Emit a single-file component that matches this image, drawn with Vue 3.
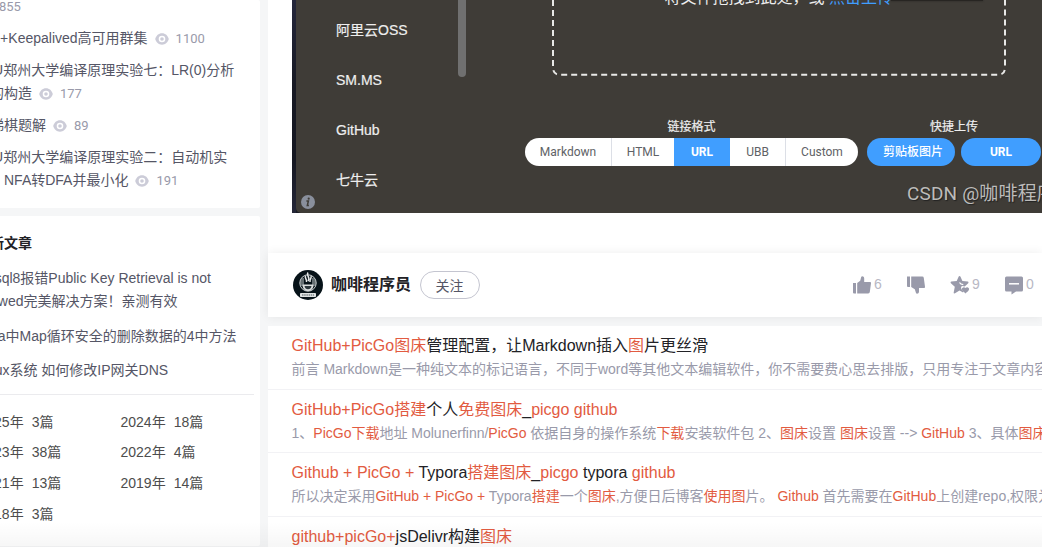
<script setup>
const hot = [
  { lines: [''], views: '855', start: true },
  { lines: ['K8s+Keepalived高可用群集'], views: '1100' },
  { lines: ['ZZU郑州大学编译原理实验七：LR(0)分析', '表的构造'], views: '177' },
  { lines: ['阶梯棋题解'], views: '89' },
  { lines: ['ZZU郑州大学编译原理实验二：自动机实', '验：NFA转DFA并最小化'], views: '191' }
]
const latest = [
  ['mysql8报错Public Key Retrieval is not', 'allowed完美解决方案！亲测有效'],
  ['Java中Map循环安全的删除数据的4中方法'],
  ['Linux系统 如何修改IP网关DNS']
]
const years = [
  ['2025年', '3篇'], ['2024年', '18篇'],
  ['2023年', '38篇'], ['2022年', '4篇'],
  ['2021年', '13篇'], ['2019年', '14篇'],
  ['2018年', '3篇']
]
const menu = ['阿里云OSS', 'SM.MS', 'GitHub', '七牛云']
const formats = ['Markdown', 'HTML', 'URL', 'UBB', 'Custom']
// Text wrapped in [ ] is a highlighted keyword.
const split = (s) => s.split(/(\[[^\]]*\])/).filter(Boolean).map((t) =>
  t[0] === '[' ? { t: t.slice(1, -1), em: true } : { t, em: false })
const related = [
  ['[GitHub+PicGo图床]管理配置，让Markdown插入[图]片更丝滑', '前言 Markdown是一种纯文本的标记语言，不同于word等其他文本编辑软件，你不需要费心思去排版，只用专注于文章内容'],
  ['[GitHub+PicGo搭建]个人[免费图床]_[picgo github]', '1、[PicGo下载]地址 Molunerfinn/[PicGo] 依据自身的操作系统[下载]安装软件包 2、[图床]设置 [图床]设置 --> [GitHub] 3、具体[图床]'],
  ['[Github + PicGo + ]Typora[搭建图床]_[picgo] typora [github]', '所以决定采用[GitHub + PicGo + ]Typora[搭建]一个[图床],方便日后博客[使用图]片。 [Github] 首先需要在[GitHub]上创建repo,权限为'],
  ['[github+picGo+]jsDelivr构建[图床]', '']
].map((r) => r.map(split))
</script>

<template>
  <div class="page">
    <aside class="side">
      <section class="card hot">
        <div v-for="(h, i) in hot" :key="i" class="hot-item" :class="{ first: h.start }">
          <div v-for="(l, j) in h.lines" :key="j" class="line">
            <span>{{ l }}</span>
            <template v-if="j === h.lines.length - 1">
              <svg v-if="!h.start" class="eye" viewBox="0 0 14 12"><path fill="#ccccd8" fill-rule="evenodd" d="M7 .3C3.500.3 1.200 2.600.2 6c1 3.400 3.300 5.700 6.800 5.700s5.800-2.300 6.800-5.700C12.800 2.600 10.500.3 7 .3zM7 2.700a3.300 3.300 0 1 1 0 6.600 3.300 3.300 0 0 1 0-6.600zM7 4.200a1.800 1.800 0 1 0 0 3.600 1.800 1.800 0 0 0 0-3.600z" /></svg>
              <span class="num">{{ h.views }}</span>
            </template>
          </div>
        </div>
      </section>
      <section class="card latest">
        <h3>最新文章</h3>
        <div v-for="(a, i) in latest" :key="i" class="late-item">
          <div v-for="l in a" :key="l" class="line">{{ l }}</div>
        </div>
        <div class="years">
          <div v-for="y in years" :key="y[0]" class="year"><span>{{ y[0] }}</span><span>{{ y[1] }}</span></div>
        </div>
      </section>
    </aside>

    <main class="main">
      <section class="article">
        <div class="shot">
          <div class="edge"></div>
          <div class="app">
            <nav class="menu">
              <div v-for="m in menu" :key="m">{{ m }}</div>
              <svg class="info" viewBox="0 0 14 14"><circle cx="7" cy="7" r="7" fill="#898f9c" /><circle cx="7.700" cy="3.700" r="1.100" fill="#3f3c37" /><path d="M5.400 6h2L6.300 10.500h1.600" fill="none" stroke="#3f3c37" stroke-width="1.500" /></svg>
            </nav>
            <div class="rail"></div>
            <div class="work">
              <svg class="drop" viewBox="0 0 456 77"><path d="M2 -1V67.500Q2 74.800 9 74.800H447Q454 74.800 454 67.500V-1" fill="none" stroke="#e9e9e7" stroke-width="2" stroke-dasharray="6 4" stroke-dashoffset="9" /></svg>
              <div class="drop-text">将文件拖拽到此处，或 <b>点击上传</b></div>
              <div class="tip"></div>
              <div class="tools">
                <div class="tool">
                  <div class="label">链接格式</div>
                  <div class="formats"><span v-for="f in formats" :key="f" :class="['f-' + f]">{{ f }}</span></div>
                </div>
                <div class="tool quick">
                  <div class="label">快捷上传</div>
                  <div class="btns"><span class="clip">剪贴板图片</span><span class="url">URL</span></div>
                </div>
              </div>
              <div class="mark">CSDN @咖啡程序员</div>
            </div>
          </div>
        </div>
      </section>

      <section class="author">
        <svg class="avatar" viewBox="0 0 30 30">
          <circle cx="15" cy="15" r="15" fill="#071319" />
          <circle cx="15" cy="13" r="8.200" fill="none" stroke="#cfd4d5" stroke-width="1" />
          <path d="M15 2.500c-2.500 3 3 4.500 0 8.500M12.500 6c-1 2 1.500 3 1 6M18 6c1 2-1.500 3-1 6" fill="none" stroke="#e8ebeb" stroke-width="1.500" />
          <path d="M8 9v7M10 8v8M20 8v8M22 9v7" stroke="#a5adaf" stroke-width="1.200" />
          <path d="M9.500 14.500h11c0 4-2 6.500-5.500 6.500s-5.500-2.500-5.500-6.500z" fill="#d9dddd" />
          <path d="M11.500 16h7c-.5 2.200-1.500 3.300-3.500 3.300s-3-1.100-3.500-3.300z" fill="#2b363b" />
          <rect x="7" y="23" width="16" height="4" rx=".8" fill="#dfe3e3" />
          <path d="M9 25h12" stroke="#4b565a" stroke-dasharray="1.500 .7" />
        </svg>
        <span class="name">咖啡程序员</span>
        <span class="follow">关注</span>
        <div class="acts">
          <div class="act up"><svg viewBox="0 0 20 20"><path fill="#999aaa" d="M1 8h3v10.500H2a1 1 0 0 1-1-1zM5.200 8l3-2.200 1-3.800c.3-1.200 3-1 3 1.500V7H18a1 1 0 0 1 1 1.200l-1.200 8.900a1.600 1.600 0 0 1-1.600 1.400h-11z" /></svg>6</div>
          <div class="act down"><svg viewBox="0 0 20 20"><path fill="#999aaa" d="M1 1.500h3V12H2a1 1 0 0 1-1-1zM5.200 1.500h11a1.600 1.600 0 0 1 1.600 1.400l1.200 8.900a1 1 0 0 1-1 1.200h-5v3.500c0 2.500-2.700 2.700-3 1.500l-1.200-3.800L5.200 12z" /></svg></div>
          <div class="act star"><svg viewBox="0 0 20 20"><path fill="#999aaa" d="M9.500 1c.5 0 .8.3 1 .8l1.900 4.300 5.300.5c.8.1 1.100 1 .5 1.600l-3.500 3.400-2.400-.6c-1.800.7-1.600 3 1 5.100l-.2 1.400-3.600-1.900-4.500 2.700c-.7.400-1.500-.1-1.300-.9l1.100-5.600L.9 8.200c-.6-.6-.3-1.500.5-1.600l5.300-.5 1.900-4.300c.2-.5.500-.8.9-.8z" /><path d="M9.500 7.500c.8 1.500 2 2 3.800 2.200" fill="none" stroke="#fff" stroke-width="1.300" /><path fill="#999aaa" d="M15.500 13c1.500-1.500 4-.3 3.500 1.600-.3 1.200-1.800 2.500-3.500 3.900-1.700-1.400-3.200-2.700-3.500-3.900-.5-1.900 2-3.100 3.500-1.600z" /></svg>9</div>
          <div class="act talk"><svg viewBox="0 0 20 20"><path fill="#999aaa" d="M2.500 1.500h15A1.500 1.500 0 0 1 19 3v12a1.500 1.500 0 0 1-1.500 1.500H12l-4.500 3v-3h-5A1.500 1.500 0 0 1 1 15V3a1.500 1.500 0 0 1 1.500-1.500z" /><path d="M5 8.800h10" stroke="#fff" stroke-width="1.500" /></svg>0</div>
        </div>
      </section>

      <section class="related">
        <article v-for="(r, i) in related" :key="i">
          <div class="r-title"><span v-for="(p, j) in r[0]" :key="j" :class="{ em: p.em }">{{ p.t }}</span></div>
          <div class="r-desc"><span v-for="(p, j) in r[1]" :key="j" :class="{ em: p.em }">{{ p.t }}</span></div>
        </article>
      </section>
    </main>
    <div class="fade"></div>
  </div>
</template>

<style>
body { margin: 0; overflow: hidden; }
</style>

<style scoped>
.page { position: relative; box-sizing: border-box; display: flex; gap: 8px; width: 1042px; height: 547px; overflow: hidden; background: #f5f6f7; font-family: "Liberation Sans", "Noto Sans CJK SC", sans-serif; font-size: 14px; white-space: pre; }
.side { flex: none; width: 300px; margin-left: -40px; display: flex; flex-direction: column; gap: 8px; }
.card { background: #fff; box-sizing: border-box; padding-left: 16px; border-radius: 2px; overflow: hidden; }
.hot { height: 208px; color: #555666; }
.hot-item { margin-bottom: 9px; }
.hot-item.first { margin-top: -5px; padding-left: 9px; }
.line { display: flex; align-items: center; height: 23px; line-height: 23px; }
.eye { width: 14px; height: 12px; margin: 1px 7px 0; }
.num { font-size: 13px; color: #999aaa; font-family: Roboto, sans-serif; }
.first .num { margin-left: 14px; }
.latest { height: 330px; color: #555666; }
h3 { margin: 16px 0 13px; font-size: 14px; line-height: 22px; color: #222226; }
.late-item { margin-bottom: 11.500px; }
.years { display: grid; grid-template-columns: 142px 1fr; grid-auto-rows: 30.800px; margin-right: 6px; padding: 12px 0 0 2px; border-top: 1px solid #ebebee; color: #4d4d4d; }
.year { display: flex; gap: 8px; line-height: 31px; padding-left: .5px; }
.main { flex: none; width: 774px; }
.article { height: 253px; padding-left: 24px; box-sizing: border-box; background: #fff; }
.shot { display: flex; height: 213px; width: 750px; background: #191b25; overflow: hidden; }
.edge { flex: none; width: 4px; background: linear-gradient(#24263a, #171923 40%, #151721 75%, #252738); }
.app { position: relative; display: flex; flex: 1; background: #3f3c37; border-bottom-left-radius: 5px; color: #eee; }
.menu { width: 162px; padding: 5px 0 0 40px; box-sizing: border-box; line-height: 50px; -webkit-text-stroke: .2px #eee; }
.info { position: absolute; left: 5px; top: 195px; width: 14px; height: 14px; }
.rail { width: 8px; height: 77px; flex: none; background: #707070; border-radius: 0 0 4px 4px; }
.work { position: relative; flex: 1; min-width: 0; }
.drop { display: block; width: 456px; height: 77px; margin-left: 85px; }
.drop-text { position: absolute; left: 198.500px; top: -12.500px; line-height: 20px; font-size: 16px; }
.drop-text b { font-weight: 400; color: #409eff; }
.tip { position: absolute; left: 425px; top: -1px; width: 92px; height: 2px; background: #272522; box-shadow: 0 0 2px #272522; }
.tools { display: flex; gap: 9px; margin: 41px 0 0 59px; }
.label { font-size: 12px; line-height: 18px; height: 20px; text-align: center; -webkit-text-stroke: .2px #eee; }
.formats, .btns { display: flex; height: 28px; font: 12px/28px Roboto, "Noto Sans CJK SC", sans-serif; text-align: center; }
.formats { width: 333px; border-radius: 14px; background: #fff; overflow: hidden; color: #606266; }
.formats span { box-sizing: border-box; border-right: 1px solid #dcdfe6; }
.formats .f-Markdown { width: 87px; }
.formats .f-HTML { width: 62px; border: 0; }
.formats .f-URL { width: 56px; border: 0; background: #409eff; color: #fff; font-weight: 700; }
.formats .f-UBB { width: 56px; }
.formats .f-Custom { width: 72px; border: 0; }
.quick { width: 174px; flex: none; }
.btns { gap: 6px; }
.btns span { background: #409eff; border-radius: 14px; color: #fff; font-weight: 500; }
.clip { width: 88px; padding-left: 4px; box-sizing: border-box; }
.btns .url { width: 80px; font-weight: 700; }
.mark { position: absolute; left: 441px; top: 182px; font: 19px/24px Roboto, "Noto Sans CJK SC", sans-serif; letter-spacing: .15px; color: #bdbcba; text-shadow: 1px 1px 1px #222; }
.author { position: relative; display: flex; align-items: center; height: 64px; padding-left: 25px; box-sizing: border-box; background: #fff; box-shadow: 0 0 10px rgba(0, 0, 0, .07); }
.avatar { width: 30px; height: 30px; }
.name { margin: -4px 10px 0 8px; width: 79px; font-size: 16px; font-weight: 700; color: #222226; }
.follow { width: 60px; height: 28px; box-sizing: border-box; border: 1px solid #c4c5d0; border-radius: 14px; text-align: center; line-height: 28px; color: #555666; padding-right: 1px; }
.acts { display: flex; margin: -2px 0 0 372px; font-size: 14px; color: #b8b8c4; }
.act { display: flex; align-items: center; flex: none; gap: 2px; }
.act svg { width: 20px; height: 20px; margin-top: 1px; }
.up, .down { width: 54px; }
.star { width: 54px; margin-left: -10px; }
.related { margin-top: 9px; height: 240px; background: #fff; }
article { height: 63.500px; box-sizing: border-box; padding: 8px 0 0 23.500px; border-bottom: 1px solid #f2f2f5; overflow: hidden; }
.r-title { font-size: 16px; line-height: 24px; color: #222226; }
.r-desc { font-size: 14px; line-height: 22px; color: #999aaa; }
.em { color: #e25b41; }
.fade { position: absolute; inset: 522px 0 0; background: linear-gradient(rgba(0, 0, 0, 0), rgba(0, 0, 0, .035)); }
</style>
